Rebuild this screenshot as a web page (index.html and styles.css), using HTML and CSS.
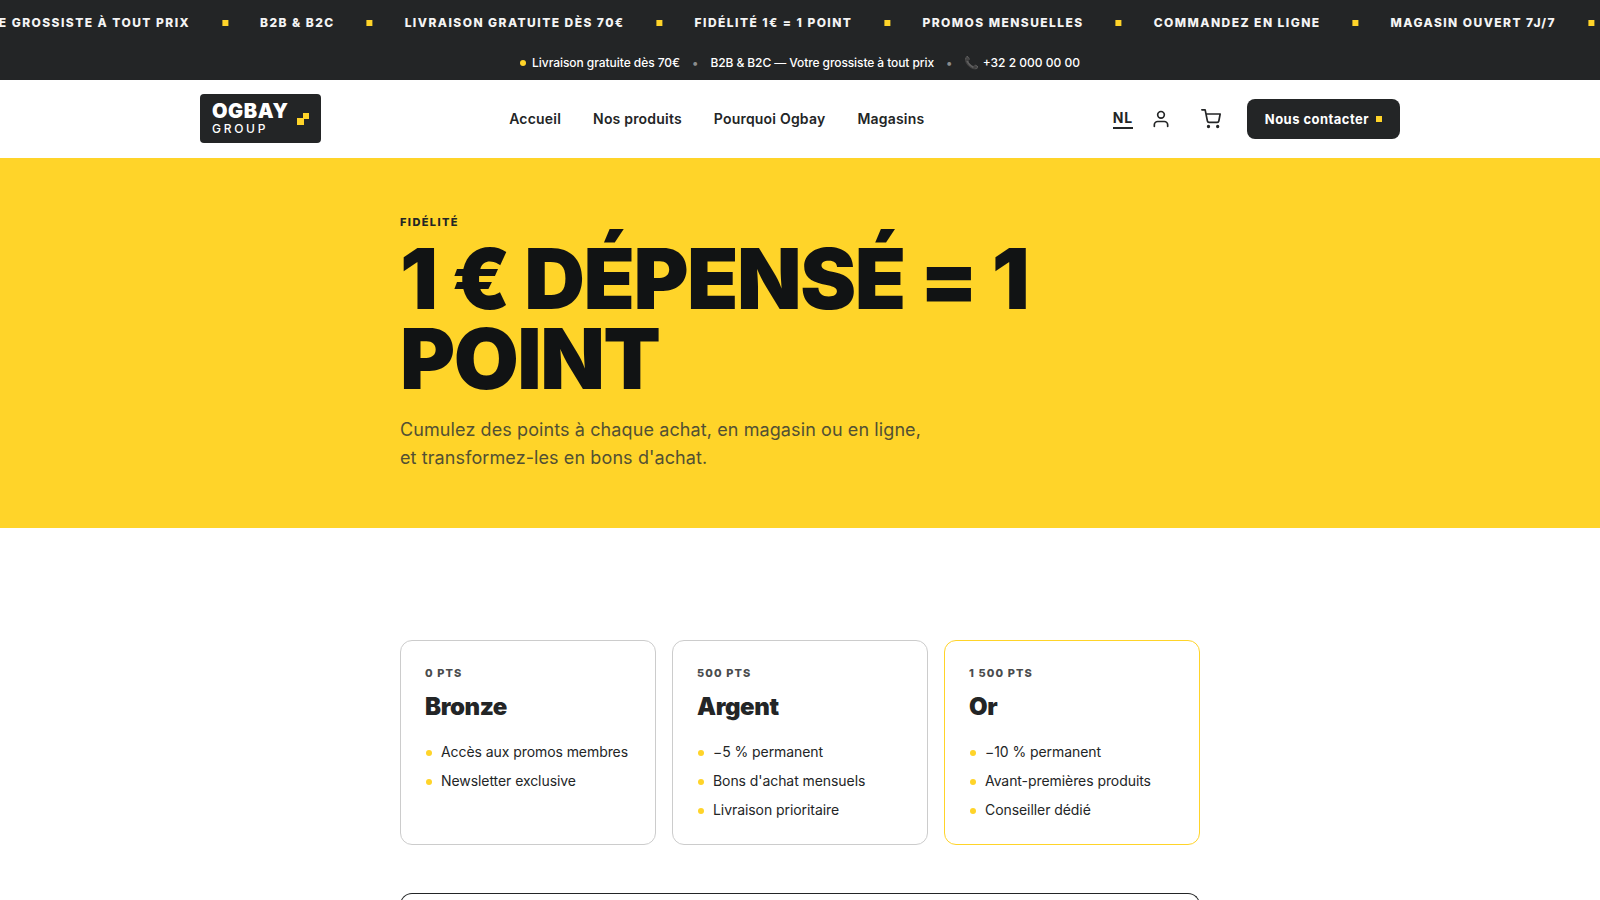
FILE: index.html
```html
<!DOCTYPE html>
<html lang="fr">
<head>
<meta charset="utf-8">
<meta name="viewport" content="width=device-width, initial-scale=1.0">
<title>Fidélité | Ogbay Group</title>
<link rel="stylesheet" href="styles.css">
</head>
<body>

<div class="marquee">
  <div class="marquee-track">
    <span>Votre grossiste à tout prix</span><i></i>
    <span>B2B &amp; B2C</span><i></i>
    <span>Livraison gratuite dès 70€</span><i></i>
    <span>Fidélité 1€ = 1 point</span><i></i>
    <span>Promos mensuelles</span><i></i>
    <span>Commandez en ligne</span><i></i>
    <span>Magasin ouvert 7j/7</span><i></i>
  </div>
</div>

<div class="topbar">
  <span class="topbar-item"><i class="dot"></i>Livraison gratuite dès 70€</span>
  <span class="sep">•</span>
  <span class="topbar-claim">B2B &amp; B2C — Votre grossiste à tout prix</span>
  <span class="sep">•</span>
  <span>📞 +32 2 000 00 00</span>
</div>

<header class="header">
  <div class="header-inner">
    <a class="logo" href="#">
      <span class="logo-text">
        <span class="logo-name">OGBAY</span>
        <span class="logo-sub">GROUP</span>
      </span>
      <svg class="logo-mark" width="12" height="12" viewBox="0 0 12 12"><path fill="#ffd429" d="M6 0h6v6H6zM0 5h7v7H0z"/></svg>
    </a>
    <nav class="nav">
      <a href="#">Accueil</a>
      <a href="#">Nos produits</a>
      <a href="#">Pourquoi Ogbay</a>
      <a href="#">Magasins</a>
    </nav>
    <div class="actions">
      <a class="lang" href="#">NL</a>
      <a class="icon-btn" href="#">
        <svg width="20" height="20" viewBox="0 0 24 24" fill="none" stroke="currentColor" stroke-width="2" stroke-linecap="round" stroke-linejoin="round"><path d="M20 21v-2a4 4 0 0 0-4-4H8a4 4 0 0 0-4 4v2"/><circle cx="12" cy="7" r="4"/></svg>
      </a>
      <a class="icon-btn" href="#">
        <svg width="20" height="20" viewBox="0 0 24 24" fill="none" stroke="currentColor" stroke-width="2" stroke-linecap="round" stroke-linejoin="round"><circle cx="9" cy="21" r="1"/><circle cx="20" cy="21" r="1"/><path d="M1 1h4l2.68 13.39a2 2 0 0 0 2 1.61h9.72a2 2 0 0 0 2-1.61L23 6H6"/></svg>
      </a>
      <a class="btn" href="#"><span>Nous contacter</span><i></i></a>
    </div>
  </div>
</header>

<section class="hero">
  <div class="wrap">
    <p class="eyebrow">Fidélité</p>
    <h1>1 € dépensé = 1 point</h1>
    <p class="lead">Cumulez des points à chaque achat, en magasin ou en ligne, et transformez-les en bons d'achat.</p>
  </div>
</section>

<main class="wrap content">
  <div class="tiers">
    <div class="tier">
      <p class="tier-pts">0 pts</p>
      <h2>Bronze</h2>
      <ul>
        <li>Accès aux promos membres</li>
        <li>Newsletter exclusive</li>
      </ul>
    </div>
    <div class="tier">
      <p class="tier-pts">500 pts</p>
      <h2>Argent</h2>
      <ul>
        <li>−5 % permanent</li>
        <li>Bons d'achat mensuels</li>
        <li>Livraison prioritaire</li>
      </ul>
    </div>
    <div class="tier tier-gold">
      <p class="tier-pts">1 500 pts</p>
      <h2>Or</h2>
      <ul>
        <li>−10 % permanent</li>
        <li>Avant-premières produits</li>
        <li>Conseiller dédié</li>
      </ul>
    </div>
  </div>
  <div class="panel"></div>
</main>

</body>
</html>
```
FILE: styles.css
```css
* {
  box-sizing: border-box;
  margin: 0;
  padding: 0;
}
html, body {
  height: 100%;
  overflow: hidden;
}
body {
  background: #fff;
  color: #232526;
  font-family: Inter, "Liberation Sans", sans-serif;
  font-size: 16px;
}
a {
  color: inherit;
  text-decoration: none;
}
.wrap {
  width: 800px;
  margin: 0 auto;
}

/* scrolling band */
.marquee {
  height: 46px;
  overflow: hidden;
  background: #232526;
  color: #f4f4f4;
}
.marquee-track {
  display: flex;
  align-items: center;
  width: max-content;
  height: 46px;
  gap: 32px;
  transform: translateX(-40.6px);
  font-size: 12px;
  font-weight: 800;
  letter-spacing: 1.44px;
  text-transform: uppercase;
  white-space: nowrap;
}
.marquee-track span {
  padding-bottom: 2px;
}
.marquee-track i {
  width: 6px;
  height: 6px;
  background: #ffd429;
}

/* info bar */
.topbar {
  display: flex;
  justify-content: center;
  align-items: center;
  gap: 12px;
  height: 34px;
  padding-bottom: 1px;
  background: #232526;
  color: #fff;
  font-size: 12px;
  font-weight: 500;
}
.topbar-item {
  display: flex;
  align-items: center;
  gap: 6px;
  letter-spacing: -0.05px;
}
.topbar-claim {
  letter-spacing: -0.09px;
}
.dot {
  width: 6px;
  height: 6px;
  border-radius: 50%;
  background: #ffd429;
}
.sep {
  color: #8b8c8d;
}

/* header */
.header {
  height: 78px;
  background: #fff;
}
.header-inner {
  display: flex;
  align-items: center;
  justify-content: space-between;
  width: 1200px;
  height: 78px;
  margin: 0 auto;
}
.logo {
  display: flex;
  align-items: center;
  gap: 8px;
  height: 49px;
  margin-bottom: 1px;
  padding: 0 12px;
  border-radius: 4px;
  background: #232526;
  color: #fff;
}
.logo-text {
  display: flex;
  flex-direction: column;
}
.logo-name {
  font-size: 20px;
  font-weight: 900;
  line-height: 20px;
  letter-spacing: 0.6px;
}
.logo-sub {
  font-size: 12px;
  font-weight: 500;
  line-height: 16px;
  letter-spacing: 2.7px;
}
.nav {
  display: flex;
  gap: 32px;
  padding-bottom: 2px;
  font-size: 14px;
  font-weight: 600;
  letter-spacing: 0.2px;
}
.actions {
  display: flex;
  align-items: center;
}
.lang {
  margin-right: 8px;
  border-bottom: 2px solid #232526;
  font-size: 14px;
  font-weight: 700;
  line-height: 18px;
  letter-spacing: 0.7px;
}
.icon-btn {
  display: flex;
  align-items: center;
  justify-content: center;
  width: 40px;
  height: 40px;
  margin-right: 10px;
}
.btn {
  display: flex;
  align-items: center;
  gap: 7px;
  height: 40px;
  margin-left: 6px;
  padding: 0 18px;
  border-radius: 8px;
  background: #232526;
  color: #fff;
  font-size: 13px;
  font-weight: 700;
  letter-spacing: 0.46px;
}
.btn span {
  padding-bottom: 1px;
}
.btn i {
  width: 6px;
  height: 6px;
  background: #ffd429;
}

/* hero */
.hero {
  height: 370px;
  padding-top: 56px;
  background: #ffd429;
}
.eyebrow {
  font-size: 11px;
  font-weight: 800;
  line-height: 16px;
  letter-spacing: 1.4px;
  text-transform: uppercase;
}
.hero h1 {
  max-width: 720px;
  margin-top: 9px;
  color: #111314;
  font-size: 84px;
  font-weight: 900;
  line-height: 0.95;
  letter-spacing: -1.5px;
  text-transform: uppercase;
}
.lead {
  max-width: 530px;
  margin-top: 17px;
  color: #525033;
  font-size: 18px;
  line-height: 28px;
  letter-spacing: 0.1px;
}

/* loyalty tiers */
.content {
  padding-top: 112px;
}
.tiers {
  display: grid;
  grid-template-columns: repeat(3, 1fr);
  gap: 16px;
}
.tier {
  height: 205px;
  padding: 24px;
  border: 1px solid #cccccc;
  border-radius: 12px;
}
.tier-gold {
  border-color: #ffd429;
}
.tier-pts {
  color: #4a4c4d;
  font-size: 11px;
  font-weight: 800;
  line-height: 16px;
  letter-spacing: 1.1px;
  text-transform: uppercase;
}
.tier h2 {
  margin-top: 10px;
  font-size: 24px;
  font-weight: 900;
  line-height: 32px;
  letter-spacing: -0.4px;
}
.tier ul {
  margin-top: 18px;
  list-style: none;
}
.tier li {
  display: flex;
  align-items: center;
  gap: 8px;
  margin-bottom: 8px;
  font-size: 14px;
  line-height: 21px;
  letter-spacing: -0.07px;
}
.tier li::before {
  content: "";
  width: 6px;
  height: 6px;
  margin: 3px 1px 0;
  border-radius: 50%;
  background: #ffd429;
}
.panel {
  height: 58px;
  margin-top: 48px;
  border: 1px solid #232526;
  border-bottom: 0;
  border-radius: 12px 12px 0 0;
}
```
